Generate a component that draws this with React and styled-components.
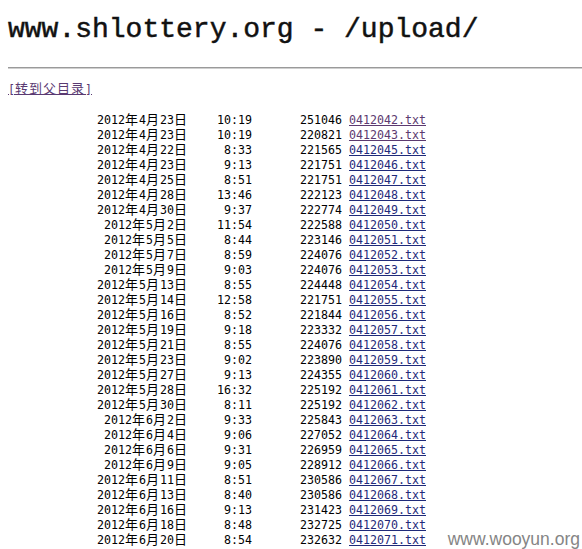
import React from "react";
import styled, { createGlobalStyle } from "styled-components";

const Global = createGlobalStyle`
  html, body { margin: 0; padding: 0; background: #fff; }
  body { font-family: "DejaVu Sans Mono", "Noto Sans CJK SC", monospace; color: #000; }
`;

const Page = styled.div`
  position: relative;
  min-height: 549px;
  box-sizing: border-box;
  padding: 8px 0 0 8px;
  overflow: hidden;
`;

const Title = styled.h1`
  margin: 6px 0 0 0;
  font-family: "Liberation Mono", "Noto Sans CJK SC", monospace;
  font-weight: normal;
  font-size: 28px;
  line-height: 32px;
  color: #111;
  -webkit-text-stroke: 0.5px #111;
  white-space: nowrap;
`;

const Rule = styled.hr`
  margin: 21px 0 0 0;
  border: 0;
  border-top: 1px solid #9a9a9a;
  border-bottom: 1px solid #cfcfcf;
  height: 0;
`;

const Listing = styled.div`
  margin-top: 13px;
  font-family: "DejaVu Sans Mono", "Noto Sans CJK SC", monospace;
  font-size: 11.63px;
  line-height: 15px;
  white-space: pre;
`;

const ParentLine = styled.div`
  height: 15px;
  margin-bottom: 16px;
`;

const ParentLink = styled.a`
  color: #5a3a72;
  text-decoration: underline;
`;

const Rows = styled.div`
  display: grid;
  grid-template-columns: 180px 64px 90px auto;
  grid-auto-rows: 15px;
  justify-content: start;
`;

const Cell = styled.span`
  text-align: right;
  height: 15px;
`;

const Han = styled.span`
  font-family: "Noto Sans CJK SC", sans-serif;
  font-size: 13px;
  letter-spacing: 1px;
  line-height: 0;
`;

const FileLink = styled.a`
  padding-left: 7px;
  height: 15px;
  color: ${(p) => (p.$visited ? "#5c3a70" : "#1f2a7a")};
  text-decoration: none;
  span {
    text-decoration: underline;
  }
`;

const Watermark = styled.div`
  position: absolute;
  right: 2px;
  bottom: 0;
  font-family: "Liberation Sans", Arial, sans-serif;
  font-size: 17.5px;
  line-height: 20px;
  color: #858585;
`;

const rows = [
  ["2012年4月23日", "10:19", "251046", "0412042.txt", true],
  ["2012年4月23日", "10:19", "220821", "0412043.txt", true],
  ["2012年4月22日", "8:33", "221565", "0412045.txt"],
  ["2012年4月23日", "9:13", "221751", "0412046.txt"],
  ["2012年4月25日", "8:51", "221751", "0412047.txt"],
  ["2012年4月28日", "13:46", "222123", "0412048.txt"],
  ["2012年4月30日", "9:37", "222774", "0412049.txt"],
  ["2012年5月2日", "11:54", "222588", "0412050.txt"],
  ["2012年5月5日", "8:44", "223146", "0412051.txt"],
  ["2012年5月7日", "8:59", "224076", "0412052.txt"],
  ["2012年5月9日", "9:03", "224076", "0412053.txt"],
  ["2012年5月13日", "8:55", "224448", "0412054.txt"],
  ["2012年5月14日", "12:58", "221751", "0412055.txt"],
  ["2012年5月16日", "8:52", "221844", "0412056.txt"],
  ["2012年5月19日", "9:18", "223332", "0412057.txt"],
  ["2012年5月21日", "8:55", "224076", "0412058.txt"],
  ["2012年5月23日", "9:02", "223890", "0412059.txt"],
  ["2012年5月27日", "9:13", "224355", "0412060.txt"],
  ["2012年5月28日", "16:32", "225192", "0412061.txt"],
  ["2012年5月30日", "8:11", "225192", "0412062.txt"],
  ["2012年6月2日", "9:33", "225843", "0412063.txt"],
  ["2012年6月4日", "9:06", "227052", "0412064.txt"],
  ["2012年6月6日", "9:31", "226959", "0412065.txt"],
  ["2012年6月9日", "9:05", "228912", "0412066.txt"],
  ["2012年6月11日", "8:51", "230586", "0412067.txt"],
  ["2012年6月13日", "8:40", "230586", "0412068.txt"],
  ["2012年6月16日", "9:13", "231423", "0412069.txt"],
  ["2012年6月18日", "8:48", "232725", "0412070.txt"],
  ["2012年6月20日", "8:54", "232632", "0412071.txt"],
];

function MixedText({ text }) {
  const parts = [];
  let buf = "";
  let han = "";
  for (const ch of text) {
    const isHan = /[\u3000-\u9fff\uff00-\uffef]/.test(ch);
    if (isHan) {
      if (buf) {
        parts.push(buf);
        buf = "";
      }
      han += ch;
    } else {
      if (han) {
        parts.push(<Han key={parts.length}>{han}</Han>);
        han = "";
      }
      buf += ch;
    }
  }
  if (buf) parts.push(buf);
  if (han) parts.push(<Han key={parts.length}>{han}</Han>);
  return <>{parts}</>;
}

export default function App() {
  return (
    <>
      <Global />
      <Page>
        <Title>www.shlottery.org - /upload/</Title>
        <Rule />
        <Listing>
          <ParentLine>
            <ParentLink href="#">
              [<MixedText text="转到父目录" />]
            </ParentLink>
          </ParentLine>
          <Rows>
            {rows.map(([d, t, s, f, v]) => (
              <React.Fragment key={f}>
                <Cell>
                  <MixedText text={d} />
                </Cell>
                <Cell>{t}</Cell>
                <Cell>{s}</Cell>
                <FileLink href="#" $visited={v}>
                  <span>{f}</span>
                </FileLink>
              </React.Fragment>
            ))}
          </Rows>
        </Listing>
        <Watermark>www.wooyun.org</Watermark>
      </Page>
    </>
  );
}
